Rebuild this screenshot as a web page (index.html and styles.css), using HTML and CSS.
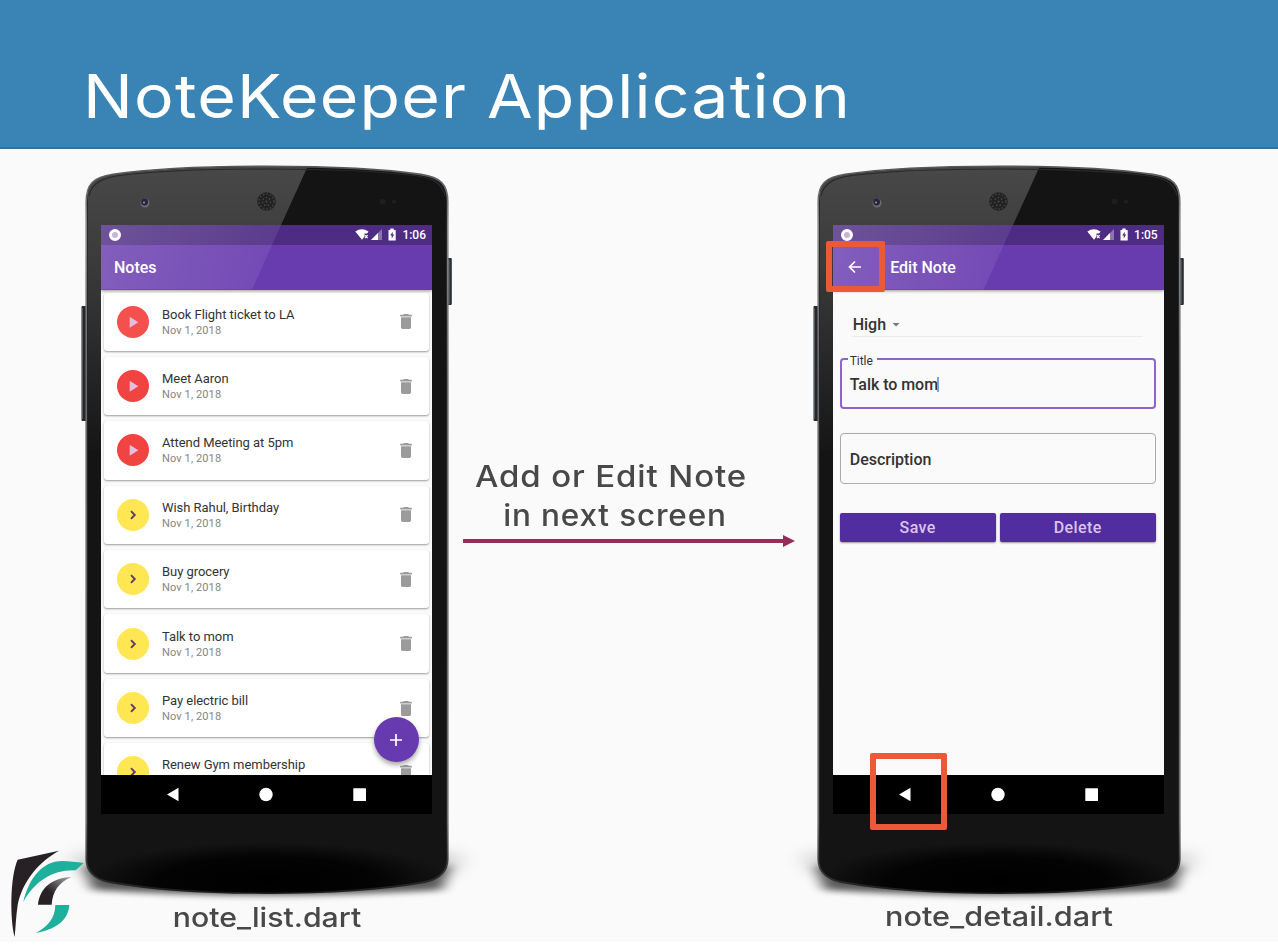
FILE: index.html
```html
<!DOCTYPE html>
<html lang="en">
<head>
<meta charset="utf-8">
<title>NoteKeeper Application</title>
<link rel="stylesheet" href="styles.css">
</head>
<body>
<svg class="defs" width="0" height="0" aria-hidden="true">
  <defs>
    <linearGradient id="gloss" x1="0" y1="0" x2="0" y2="1">
      <stop offset="0" stop-color="#494949"/><stop offset=".35" stop-color="#3b3b3b"/><stop offset="1" stop-color="#161616"/>
    </linearGradient>
    <linearGradient id="edge" x1="0" y1="0" x2="0" y2="1">
      <stop offset="0" stop-color="#55575a"/><stop offset=".08" stop-color="#85878a"/><stop offset=".3" stop-color="#66686b"/><stop offset=".9" stop-color="#6c6d70"/><stop offset="1" stop-color="#1c1c1c"/>
    </linearGradient>
    <radialGradient id="chin" cx=".5" cy=".5" r=".5">
      <stop offset="0" stop-color="#000"/><stop offset=".6" stop-color="#000" stop-opacity=".85"/><stop offset="1" stop-color="#000" stop-opacity="0"/>
    </radialGradient>
    <filter id="soft" x="-20%" y="-80%" width="140%" height="260%"><feGaussianBlur stdDeviation="7 3"/></filter>
    <filter id="wide" x="-20%" y="-80%" width="140%" height="260%"><feGaussianBlur stdDeviation="12 8"/></filter>
    <clipPath id="bodyclip"><path d="M86.800 202C86.800 184 94 178 113 175C152 169.500 208 167 267 167C326 167 382 169.500 421 175C440 178 447.200 184 447.200 202V859C447.200 871 439 878 425 881C385 888 330 892.500 267 892.500C204 892.500 149 888 109 881C95 878 86.800 871 86.800 859Z"/></clipPath>
    <symbol id="device" viewBox="80 160 374 740" overflow="visible">
      <path d="M72 856Q78 888 267 888T462 856Z" fill="#000" opacity=".25" filter="url(#wide)"/>
      <path d="M84 866L92 890Q267 900 442 890L450 866Z" fill="#000" opacity=".62" filter="url(#soft)"/>
      <rect x="81.500" y="306" width="5" height="115" rx="1" fill="#252729"/><path d="M82.500 308V419" stroke="#55585b"/>
      <rect x="447" y="258" width="4.800" height="47" rx="1" fill="#2c2e30"/><path d="M449 260V304" stroke="#666a6e"/>
      <path d="M86.300 202C86.300 184 93.500 177.500 113 174.500C152 168.500 208 166.300 267 166.300C326 166.300 382 168.500 421 174.500C440.500 177.500 447.700 184 447.700 202V859C447.700 871.500 439 879 425 882C385 889 330 893 267 893C204 893 149 889 109 882C95 879 86.300 871.500 86.300 859Z" fill="#141414" stroke="url(#edge)" stroke-width="1.800"/>
      <g clip-path="url(#bodyclip)">
        <path d="M88 160H311L306 170L252 289L180 450H88Z" fill="url(#gloss)"/>
        <path d="M89 196C92 181 106 177.500 120 175.500C165 170 210 169 267 169S370 170 414 175.500C430 177.500 442 181 445 196" fill="none" stroke="#2a2a2a" stroke-width="1.200"/>
        <ellipse cx="267" cy="880" rx="180" ry="38" fill="url(#chin)"/>
      </g>
      <circle cx="145" cy="203" r="4.500" fill="#6c6c70"/><circle cx="144.600" cy="202" r="3.400" fill="#26263a"/><circle cx="144" cy="202.500" r="1" fill="#9a93d8"/>
      <circle cx="266.500" cy="201.500" r="9.300" fill="#222"/><circle cx="266.500" cy="201.500" r="7.500" fill="none" stroke="#454545" stroke-width="1.400" stroke-dasharray="1.500 2"/><circle cx="266.500" cy="201.500" r="4" fill="none" stroke="#454545" stroke-width="1.400" stroke-dasharray="1.500 2"/><circle cx="266.500" cy="201.500" r="1" fill="#4a4a4a"/>
      <circle cx="382.500" cy="201.500" r="3" fill="#1e1e1e"/><circle cx="394" cy="201.500" r="2.300" fill="#1e1e1e"/>
    </symbol>
    <symbol id="signals" viewBox="0 0 42 14">
      <path d="M.3 3.600Q6.800-1.200 13.500 3.600L12.200 5.600H9.500V8.500L7 11.700Z" fill="#fff"/><path d="M10 7.200l2.600 3m0-3L10 10.200" stroke="#fff" stroke-width="1.100"/>
      <path d="M16 12L27 1V12Z" fill="#fff" opacity=".35"/><path d="M16 12L23 5V12Z" fill="#fff"/>
      <path d="M33.500 2H35.300V.6H38.700V2H40.700V12.400H33.500Z" fill="#fff"/><path d="M37.700 3.800L35.200 7.400H36.700V10.500L39.200 6.600H37.700Z" fill="#4d2e80"/>
    </symbol>
    <symbol id="trash" viewBox="5 3 14 18"><path d="M6 19c0 1.100.9 2 2 2h8c1.100 0 2-.9 2-2V7H6v12zM19 4h-3.500l-1-1h-5l-1 1H5v2h14V4z" fill="#9b9b9b"/></symbol>
    <symbol id="play" viewBox="0 0 32 32"><path d="M12.700 10.700L21.300 16.200L12.700 21.700Z" fill="#e3bfe4"/></symbol>
    <symbol id="next" viewBox="0 0 32 32"><path d="M14 12.200L17.800 16L14 19.800" fill="none" stroke="#633a63" stroke-width="1.900"/></symbol>
    <symbol id="nav" viewBox="0 0 331 39"><path d="M66 19.500L77.500 12.700V26.300Z" fill="#fff"/><circle cx="165" cy="19.500" r="6.700" fill="#fff"/><rect x="252.300" y="13.300" width="12.700" height="12.700" rx=".5" fill="#fff"/></symbol>
  </defs>
</svg>
<div class="slide">
  <header class="banner"><h1>NoteKeeper Application</h1></header>
  <main class="stage">
    <section class="unit">
      <div class="phone">
        <svg class="device"><use href="#device"/></svg>
        <div class="screen">
          <div class="top">
            <div class="status"><i class="ring"></i><svg class="signals"><use href="#signals"/></svg><span>1:06</span></div>
            <div class="appbar"><h2>Notes</h2></div>
          </div>
          <div class="list">
            <article class="card"><svg class="avatar high first"><use href="#play"/></svg><div class="text"><h3>Book Flight ticket to LA</h3><p>Nov 1, 2018</p></div><svg class="trash"><use href="#trash"/></svg></article>
            <article class="card"><svg class="avatar high"><use href="#play"/></svg><div class="text"><h3>Meet Aaron</h3><p>Nov 1, 2018</p></div><svg class="trash"><use href="#trash"/></svg></article>
            <article class="card"><svg class="avatar high"><use href="#play"/></svg><div class="text"><h3>Attend Meeting at 5pm</h3><p>Nov 1, 2018</p></div><svg class="trash"><use href="#trash"/></svg></article>
            <article class="card"><svg class="avatar low"><use href="#next"/></svg><div class="text"><h3>Wish Rahul, Birthday</h3><p>Nov 1, 2018</p></div><svg class="trash"><use href="#trash"/></svg></article>
            <article class="card"><svg class="avatar low"><use href="#next"/></svg><div class="text"><h3>Buy grocery</h3><p>Nov 1, 2018</p></div><svg class="trash"><use href="#trash"/></svg></article>
            <article class="card"><svg class="avatar low"><use href="#next"/></svg><div class="text"><h3>Talk to mom</h3><p>Nov 1, 2018</p></div><svg class="trash"><use href="#trash"/></svg></article>
            <article class="card"><svg class="avatar low"><use href="#next"/></svg><div class="text"><h3>Pay electric bill</h3><p>Nov 1, 2018</p></div><svg class="trash"><use href="#trash"/></svg></article>
            <article class="card"><svg class="avatar low"><use href="#next"/></svg><div class="text"><h3>Renew Gym membership</h3></div><svg class="trash"><use href="#trash"/></svg></article>
            <div class="fab"><svg viewBox="0 0 12 12"><path d="M6 0V12M0 6H12" stroke="#fff" stroke-width="1.700"/></svg></div>
          </div>
          <svg class="nav"><use href="#nav"/></svg>
        </div>
      </div>
      <p class="file">note_list.dart</p>
    </section>
    <section class="flow">
      <p class="line1">Add or Edit Note</p>
      <p class="line2">in next screen</p>
      <svg class="arrow" viewBox="0 0 332 12"><path d="M0 6H322" stroke="#962d5a" stroke-width="4"/><path d="M320 0L332 6L320 12Z" fill="#962d5a"/></svg>
    </section>
    <section class="unit detail">
      <div class="phone">
        <svg class="device"><use href="#device"/></svg>
        <div class="screen">
          <div class="top">
            <div class="status"><i class="ring"></i><svg class="signals"><use href="#signals"/></svg><span>1:05</span></div>
            <div class="appbar"><svg class="back" viewBox="0 0 14 14"><path d="M13 7H1.500M7 1.500L1.500 7L7 12.500" fill="none" stroke="#fff" stroke-width="1.700"/></svg><h2>Edit Note</h2></div>
          </div>
          <form class="form">
            <div class="select">High<i></i></div>
            <div class="field active"><label>Title</label><span>Talk to mom</span><i class="caret"></i></div>
            <div class="field">Description</div>
            <div class="actions"><button type="button">Save</button><button type="button">Delete</button></div>
          </form>
          <svg class="nav"><use href="#nav"/></svg>
        </div>
        <div class="mark mark-back"></div>
        <div class="mark mark-nav"></div>
      </div>
      <p class="file">note_detail.dart</p>
    </section>
  </main>
  <svg class="logo" viewBox="0 0 360 306">
    <defs><linearGradient id="ink" x1="0" y1="1" x2="1" y2="0"><stop offset=".4" stop-color="#272125"/><stop offset="1" stop-color="#aaa"/></linearGradient></defs>
    <path d="M53 59L177 32C115 66 67 125 53 195C48 228 47 260 44 291C30 240 29 112 53 59Z" fill="#272125"/>
    <path d="M70 185C84 125 116 77 164 65C190 60 220 65 251 69L227 91C160 88 106 122 70 185Z" fill="#1eb09d"/>
    <path d="M114 194C119 146 153 114 214 111C176 128 158 153 155 194Z" fill="url(#ink)"/>
    <path d="M166 195H208C204 244 166 268 107 279C144 260 165 234 166 195Z" fill="#1eb09d"/>
  </svg>
</div>
</body>
</html>
```
FILE: styles.css
```css
* { box-sizing: border-box; margin: 0; padding: 0; }
body { background: #fff; font-family: Roboto, "Liberation Sans", sans-serif; overflow: hidden; }
svg { display: block; }
.defs { position: absolute; }
.slide { position: relative; width: 1278px; height: 942px; background: #fafafa; overflow: hidden; }
.banner { height: 149px; background: #3983b5; border-bottom: 2px solid #386f94; padding: 58px 0 0 83px; }
.banner h1 { width: max-content; font: 380 61px/76px Inter, sans-serif; color: #fff; letter-spacing: 1.1px; white-space: nowrap; transform: scaleX(1.085); transform-origin: left; }
.stage { display: flex; padding: 11px 0 0 80px; }
.unit { width: 374px; flex: none; }
.phone { position: relative; width: 374px; height: 740px; padding: 65px 0 0 21px; }
.device { position: absolute; inset: 0; width: 374px; height: 740px; overflow: visible; }
.screen { position: relative; width: 331px; height: 589px; display: flex; flex-direction: column; background: #fafafa; overflow: hidden; }
.top { position: relative; z-index: 1; flex: none; height: 64.5px; background: #683bae; box-shadow: 0 1px 3px rgba(0,0,0,.4); color: #fff; }
.top::after { content: ""; position: absolute; inset: 0; background: linear-gradient(100deg, rgba(255,255,255,.18), rgba(255,255,255,.07) 55%); clip-path: polygon(0 0, 180px 0, 151px 100%, 0 100%); }
.status { height: 20px; padding: 0 6px 0 8px; display: flex; align-items: center; background: #4e2c84; font-size: 12px; font-weight: 500; }
.ring { width: 12px; height: 12px; border-radius: 50%; border: 3px solid #fff; background: #b9a5cf; margin-right: auto; }
.signals { width: 42px; height: 14px; margin-right: 5px; }
.appbar { height: 45.5px; display: flex; align-items: center; padding-left: 13px; }
.appbar h2 { font-size: 16px; font-weight: 500; }
.back { width: 14px; height: 14px; margin: -1px 28.5px 0 2px; }
.list { position: relative; flex: 1; padding: 3px 3px 0 3px; display: flex; flex-direction: column; gap: 6px; overflow: hidden; }
.card { flex: none; height: 58.4px; padding: 0 17px 0 13px; display: flex; align-items: center; background: #fff; border-radius: 3px; box-shadow: 0 1px 2px rgba(0,0,0,.38); }
.avatar { width: 32px; height: 32px; border-radius: 50%; margin-right: 13px; }
.high { background: #f14342; }
.high.first { background: #f4504e; }
.low { background: #fee753; }
.text { flex: 1; height: 36px; padding-top: 2px; }
.text h3 { font-size: 13px; line-height: 17px; font-weight: 400; color: #333; letter-spacing: -.05px; }
.text p { font-size: 11px; line-height: 16px; color: #858585; letter-spacing: .12px; }
.trash { width: 12px; height: 15px; }
.fab { position: absolute; left: 272.5px; top: 427.5px; width: 45px; height: 45px; border-radius: 50%; background: #673ab0; display: grid; place-items: center; box-shadow: 0 3px 5px rgba(0,0,0,.35); }
.fab svg { width: 12px; height: 12px; }
.nav { flex: none; width: 331px; height: 39px; background: #000; }
.file { font: 550 27px/36px Inter, sans-serif; color: #484848; text-align: center; transform: scaleX(1.12); }
.detail .file { line-height: 34px; transform: scaleX(1.135); }
.flow { width: 357.7px; flex: none; padding: 297px 17px 0 9px; color: #484848; font: 550 30px/39px Inter, sans-serif; display: flex; flex-direction: column; }
.line1, .line2 { text-align: center; white-space: nowrap; letter-spacing: .8px; }
.line1 { width: 296px; transform: scaleX(1.1); }
.line2 { width: 304px; transform: scaleX(1.05); }
.arrow { width: 332px; height: 12px; }
.form { flex: 1; padding: 19px 8px 0 7px; font-size: 16px; font-weight: 500; color: #333; }
.select { height: 28px; margin: 0 13px 0 12px; padding: 6px 0 0 1px; line-height: 20px; border-bottom: 1px solid #ececec; display: flex; }
.select i { margin: 8px 0 0 6px; width: 8px; height: 4px; background: #777; clip-path: polygon(0 0, 100% 0, 50% 100%); }
.field { position: relative; height: 51.5px; border: 1px solid #aaa; border-radius: 4px; padding: 2px 9px 0; margin-top: 23.5px; display: flex; align-items: center; }
.field.active { border: 2px solid #9063cc; padding: 1px 8px 0; margin-top: 21.5px; height: 51px; letter-spacing: -.05px; }
.field label { position: absolute; left: 6px; top: -6px; padding: 0 4px 0 2px; font-size: 12px; line-height: 14px; font-weight: 450; background: #fafafa; }
.caret { width: 2px; height: 15px; margin-left: -1px; background: #6fa3ea; }
.actions { display: grid; grid-template-columns: 1fr 1fr; gap: 4px; margin-top: 28.5px; }
.actions button { height: 29.5px; border: 0; border-radius: 2px; background: #512da0; color: #dcc3ef; font: 500 16px Roboto, sans-serif; box-shadow: 0 1px 2px rgba(0,0,0,.4); letter-spacing: .4px; }
.mark { position: absolute; z-index: 2; border: 6px solid #eb5936; border-radius: 2px; }
.mark-back { left: 14px; top: 81px; width: 59px; height: 50.5px; }
.mark-nav { left: 58px; top: 593px; width: 77px; height: 77px; }
.logo { position: absolute; left: 0; top: 840px; width: 120px; height: 102px; }
```
